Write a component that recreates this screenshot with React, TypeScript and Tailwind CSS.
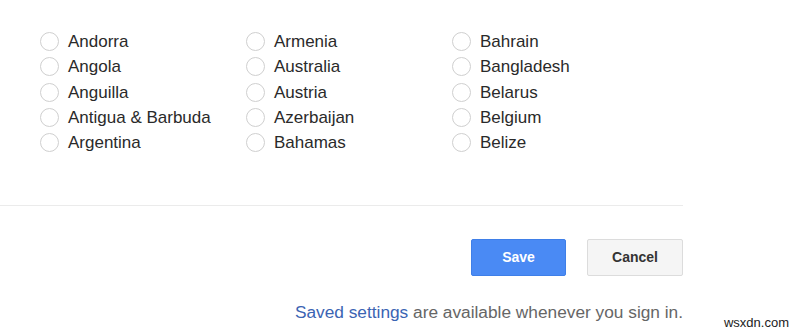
import React from 'react';

const columns: string[][] = [
  ['Andorra', 'Angola', 'Anguilla', 'Antigua & Barbuda', 'Argentina'],
  ['Armenia', 'Australia', 'Austria', 'Azerbaijan', 'Bahamas'],
  ['Bahrain', 'Bangladesh', 'Belarus', 'Belgium', 'Belize'],
];

// Single radio row
const RadioItem: React.FC<{ label: string }> = ({ label }) => (
  <label className="flex items-center h-[25.3px] cursor-pointer">
    <span className="w-[19px] h-[19px] rounded-full border border-[#cfcfcf] bg-white shrink-0" />
    <span className="ml-[9px] text-[17px] text-[#2a2a2a]">{label}</span>
  </label>
);

function App() {
  return (
    <div className="relative w-[800px] h-[334px] bg-white overflow-hidden font-['Liberation_Sans',Arial,sans-serif]">
      <div className="w-[683px]">
        {/* Country list */}
        <div className="pl-[40px] pt-[29px] grid grid-cols-[206px_206px_206px]">
          {columns.map((col, i) => (
            <div key={i} className="flex flex-col">
              {col.map((c) => (
                <RadioItem key={c} label={c} />
              ))}
            </div>
          ))}
        </div>

        {/* Divider */}
        <div className="mt-[50px] border-t border-[#ebebeb]" />

        {/* Actions */}
        <div className="mt-[33px] flex justify-end gap-[21px]">
          <button className="w-[95px] h-[37px] rounded-[2px] bg-[#4a8af4] border border-[#3f7fe8] text-white text-[14px] font-bold">
            Save
          </button>
          <button className="w-[96px] h-[37px] rounded-[2px] bg-[#f5f5f5] border border-[#dcdcdc] text-[#333] text-[14px] font-bold">
            Cancel
          </button>
        </div>

        {/* Footer note */}
        <p className="mt-[26px] text-right text-[17.3px] leading-[20px] text-[#666]">
          <a className="text-[#3b64b3]">Saved settings</a> are available whenever you sign in.
        </p>
      </div>

      {/* Watermark */}
      <span className="absolute right-[11px] bottom-[3px] text-[13px] leading-[16px] text-[#222] bg-white">wsxdn.com</span>
    </div>
  );
}

export default App;
